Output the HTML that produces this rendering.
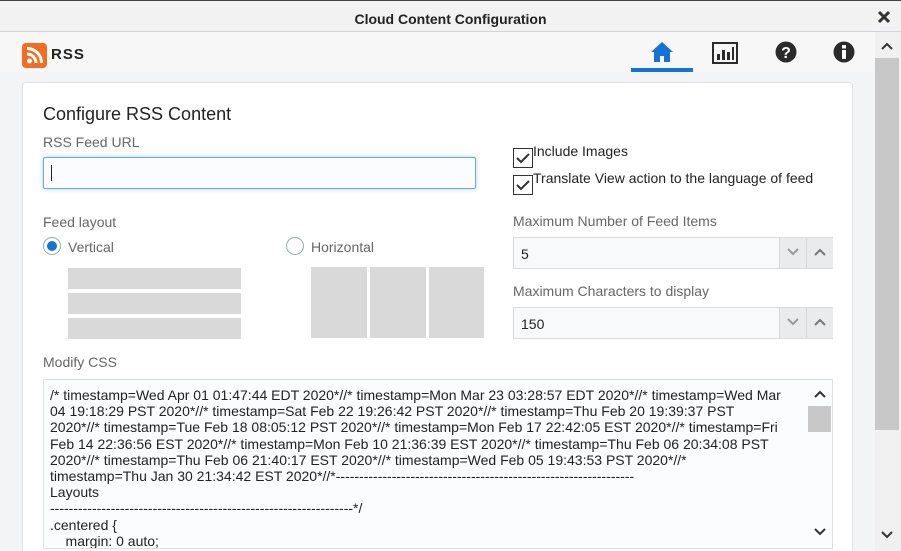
<!DOCTYPE html>
<html><head><style>
*{box-sizing:border-box;margin:0;padding:0}
html,body{width:901px;height:551px;overflow:hidden}
body{background:#fff;font-family:"Liberation Sans",Arial,sans-serif;position:relative;color:#333}
.abs{position:absolute}
.title{left:0;top:0;width:901px;height:32px;background:#f2f2f2;border-top:1px solid #444;border-bottom:1px solid #cfd6dd;text-align:center;font-weight:bold;font-size:14px;line-height:36px;color:#222}
.hdr{left:0;top:32px;width:875px;height:40px;background:#f7f7f7;box-shadow:0 2px 3px rgba(0,0,0,.08)}
.main{left:0;top:72px;width:875px;height:479px;background:#f3f4f5}
.panel{left:22px;top:82px;width:831px;height:475px;background:#fff;border:1px solid #dfe3e8;border-radius:4px}
.lbl{font-size:14px;color:#666}
.sb{left:875px;top:32px;width:26px;height:519px;background:#f0f0f0}
.thumb{left:875px;top:58px;width:24px;height:372px;background:#c8c8c8}
.spin{background:#f7f9fb;border:1px solid #d8dcdf;height:32px;font-size:14px;color:#222;line-height:32px;padding-left:7px}
.btn{position:absolute;top:0;width:27px;height:30px;background:#e9ebed;border-left:1px solid #d5d8db}
.btn svg{position:absolute;left:7px;top:10px}
.gray{background:#d9d9d9}
.ta{left:43px;top:379px;width:790px;height:170px;background:#fbfcfd;border:1px solid #dcdfe2;font-size:14px;line-height:16.2px;color:#222;padding:7px 0 0 6px;overflow:hidden;white-space:nowrap}
</style></head><body>
<div class="abs title">Cloud Content Configuration</div>
<svg class="abs" style="left:877px;top:10px" width="14" height="14" viewBox="0 0 14 14"><path d="M2 2L12 12M12 2L2 12" stroke="#333" stroke-width="3"/></svg>
<div class="abs hdr"></div>
<div class="abs" style="left:22px;top:43px;width:25px;height:25px;background:#f26d21;border-radius:4px">
<svg width="25" height="25" viewBox="0 0 25 25"><circle cx="7.5" cy="18" r="2.5" fill="#fff"/><path d="M5 11a9 9 0 0 1 9 9" stroke="#fff" stroke-width="3" fill="none"/><path d="M5 5.5a14.5 14.5 0 0 1 14.5 14.5" stroke="#fff" stroke-width="3" fill="none"/></svg></div>
<div class="abs" style="left:51px;top:46px;font-size:15px;font-weight:bold;letter-spacing:1px;color:#222">RSS</div>
<svg class="abs" style="left:650px;top:41px" width="24" height="22" viewBox="0 0 24 22"><path d="M12 1L1 11h3v10h6v-6h4v6h6V11h3z" fill="#1474d4"/></svg>
<div class="abs" style="left:631px;top:68px;width:62px;height:4px;background:#1474d4"></div>
<svg class="abs" style="left:712px;top:42px" width="26" height="22" viewBox="0 0 26 22"><rect x="1" y="1" width="24" height="20" fill="none" stroke="#2b2b2b" stroke-width="2"/><rect x="5" y="12" width="3" height="6" fill="#2b2b2b"/><rect x="10" y="8" width="3" height="10" fill="#2b2b2b"/><rect x="15" y="10" width="3" height="8" fill="#2b2b2b"/><rect x="20" y="5" width="2" height="13" fill="#2b2b2b"/></svg>
<svg class="abs" style="left:775px;top:41px" width="22" height="22" viewBox="0 0 22 22"><circle cx="11" cy="11" r="10.5" fill="#2b2b2b"/><text x="11" y="17" font-family="Liberation Sans" font-weight="bold" font-size="16" fill="#fff" text-anchor="middle">?</text></svg>
<svg class="abs" style="left:833px;top:41px" width="22" height="22" viewBox="0 0 22 22"><circle cx="11" cy="11" r="10.5" fill="#2b2b2b"/><rect x="9" y="4" width="4" height="3.5" fill="#fff"/><rect x="9" y="9" width="4" height="9" fill="#fff"/></svg>
<div class="abs main"></div>
<div class="abs panel"></div>
<div class="abs sb"></div>
<div class="abs thumb"></div>
<svg class="abs" style="left:881px;top:42px" width="12" height="8"><path d="M1 7L6 2L11 7" stroke="#333" stroke-width="2" fill="none"/></svg>
<svg class="abs" style="left:881px;top:531px" width="12" height="8"><path d="M1 1L6 6L11 1" stroke="#333" stroke-width="2" fill="none"/></svg>
<div class="abs" style="left:43px;top:104px;font-size:18px;color:#222">Configure RSS Content</div>
<div class="abs lbl" style="left:43px;top:134px">RSS Feed URL</div>
<div class="abs" style="left:43px;top:157px;width:433px;height:32px;background:#fbfcfd;border:1px solid #6aa9e6;border-radius:2px;box-shadow:0 0 4px rgba(100,160,230,.5)"><div style="position:absolute;left:7px;top:7px;width:1px;height:16px;background:#222"></div></div>
<div class="abs lbl" style="left:43px;top:214px">Feed layout</div>
<div class="abs" style="left:43px;top:237px;width:18px;height:18px;border:1px solid #9aa;border-radius:50%;background:#fff"><div style="margin:3px;width:10px;height:10px;border-radius:50%;background:#1474d4"></div></div>
<div class="abs lbl" style="left:68px;top:239px">Vertical</div>
<div class="abs" style="left:286px;top:237px;width:18px;height:18px;border:1px solid #9aa;border-radius:50%;background:#fff"></div>
<div class="abs lbl" style="left:311px;top:239px">Horizontal</div>
<div class="abs gray" style="left:68px;top:268px;width:173px;height:21px"></div>
<div class="abs gray" style="left:68px;top:293px;width:173px;height:21px"></div>
<div class="abs gray" style="left:68px;top:318px;width:173px;height:21px"></div>
<div class="abs gray" style="left:311px;top:267px;width:56px;height:71px"></div>
<div class="abs gray" style="left:370px;top:267px;width:56px;height:71px"></div>
<div class="abs gray" style="left:429px;top:267px;width:55px;height:71px"></div>
<div class="abs" style="left:513px;top:148px;width:20px;height:20px;border:1.5px solid #333;background:#fff"><svg width="18" height="18"><path d="M3 9l4 4 8-8" stroke="#333" stroke-width="2" fill="none"/></svg></div>
<div class="abs" style="left:533px;top:143px;font-size:14px;color:#222">Include Images</div>
<div class="abs" style="left:513px;top:175px;width:20px;height:20px;border:1.5px solid #333;background:#fff"><svg width="18" height="18"><path d="M3 9l4 4 8-8" stroke="#333" stroke-width="2" fill="none"/></svg></div>
<div class="abs" style="left:533px;top:170px;font-size:14px;color:#222">Translate View action to the language of feed</div>
<div class="abs lbl" style="left:513px;top:213px">Maximum Number of Feed Items</div>
<div class="abs spin" style="left:513px;top:237px;width:320px">5<div class="btn" style="left:265px"><svg width="12" height="8"><path d="M1 1L6 6L11 1" stroke="#999" stroke-width="2" fill="none"/></svg></div><div class="btn" style="left:292px"><svg width="12" height="8"><path d="M1 7L6 2L11 7" stroke="#777" stroke-width="2" fill="none"/></svg></div></div>
<div class="abs lbl" style="left:513px;top:283px">Maximum Characters to display</div>
<div class="abs spin" style="left:513px;top:307px;width:320px">150<div class="btn" style="left:265px"><svg width="12" height="8"><path d="M1 1L6 6L11 1" stroke="#999" stroke-width="2" fill="none"/></svg></div><div class="btn" style="left:292px"><svg width="12" height="8"><path d="M1 7L6 2L11 7" stroke="#777" stroke-width="2" fill="none"/></svg></div></div>
<div class="abs lbl" style="left:43px;top:354px">Modify CSS</div>
<div class="abs ta">/* timestamp=Wed Apr 01 01:47:44 EDT 2020*//* timestamp=Mon Mar 23 03:28:57 EDT 2020*//* timestamp=Wed Mar<br>04 19:18:29 PST 2020*//* timestamp=Sat Feb 22 19:26:42 PST 2020*//* timestamp=Thu Feb 20 19:39:37 PST<br>2020*//* timestamp=Tue Feb 18 08:05:12 PST 2020*//* timestamp=Mon Feb 17 22:42:05 EST 2020*//* timestamp=Fri<br>Feb 14 22:36:56 EST 2020*//* timestamp=Mon Feb 10 21:36:39 EST 2020*//* timestamp=Thu Feb 06 20:34:08 PST<br>2020*//* timestamp=Thu Feb 06 21:40:17 EST 2020*//* timestamp=Wed Feb 05 19:43:53 PST 2020*//*<br>timestamp=Thu Jan 30 21:34:42 EST 2020*//*----------------------------------------------------------------<br>Layouts<br>-----------------------------------------------------------------*/<br>.centered {<br>&nbsp;&nbsp;&nbsp;&nbsp;margin: 0 auto;</div>
<div class="abs" style="left:807px;top:380px;width:25px;height:168px;background:#fbfcfd"></div>
<div class="abs" style="left:808px;top:406px;width:23px;height:26px;background:#c8c8c8"></div>
<svg class="abs" style="left:814px;top:390px" width="12" height="8"><path d="M1 7L6 2L11 7" stroke="#333" stroke-width="2" fill="none"/></svg>
<svg class="abs" style="left:814px;top:528px" width="12" height="8"><path d="M1 1L6 6L11 1" stroke="#333" stroke-width="2" fill="none"/></svg>
</body></html>
